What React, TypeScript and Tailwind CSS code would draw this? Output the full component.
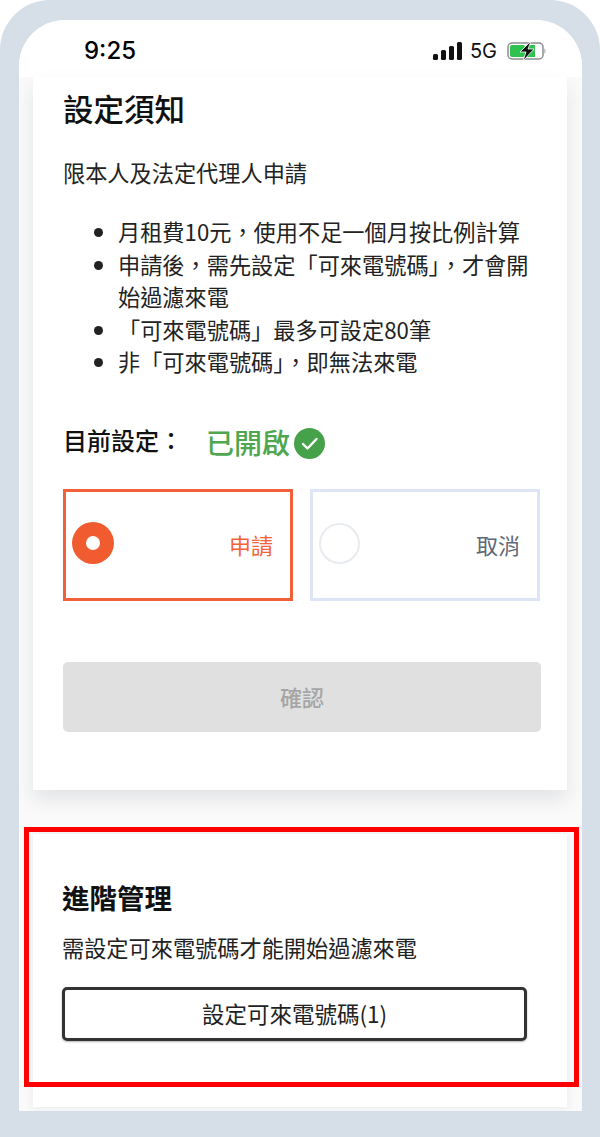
const cjk = "font-['Noto_Sans_CJK_TC','Noto_Sans',sans-serif]";

function StatusBar() {
  return (
    <div className="flex h-[57px] items-center justify-between bg-white pl-[65px] pr-[36px] pt-[5px]">
      <span className="font-['Inter',sans-serif] text-[24px] font-medium leading-none text-black">9:25</span>
      <div className="flex items-center">
        <svg width="29" height="19" viewBox="0 0 29 19" className="mr-[8px]">
          <rect x="0" y="12" width="5" height="6" rx="1.5" fill="#111" />
          <rect x="8" y="8" width="5" height="10" rx="1.5" fill="#111" />
          <rect x="16" y="4" width="5" height="14" rx="1.5" fill="#111" />
          <rect x="24" y="0" width="5" height="18" rx="1.5" fill="#111" />
        </svg>
        <span className="font-['Inter',sans-serif] text-[20px] leading-none text-[#111]">5G</span>
        <svg width="39" height="20" viewBox="0 0 39 20" className="ml-[10px]">
          <rect x="1" y="2" width="35" height="16" rx="4" fill="#fff" stroke="#8d8d8d" strokeWidth="1.5" />
          <rect x="3" y="4" width="15" height="12" rx="2" fill="#2fc24f" />
          <path d="M20 4h8v12h-8z" fill="#2fc24f" />
          <path d="M37.5 7.5c1.2.6 1.2 4.4 0 5z" fill="#8d8d8d" />
          <path d="M24 0L13 11h6l-3 9 11-12h-6z" fill="#111" stroke="#fff" strokeWidth="0.8" />
        </svg>
      </div>
    </div>
  );
}

function RadioCard({ label, selected }: { label: string; selected: boolean }) {
  return (
    <div
      className={`flex h-[112px] w-[230px] items-center justify-between pl-[6px] pr-[17px] border-[3px] ${
        selected ? "border-[#f2603a]" : "border-[#dce4f5]"
      }`}
    >
      {selected ? (
        <div className="mb-[3px] flex h-[42px] w-[42px] items-center justify-center rounded-full bg-[#f05c30]">
          <div className="h-[14px] w-[14px] rounded-full bg-white" />
        </div>
      ) : (
        <div className="mb-[3px] h-[41px] w-[41px] rounded-full border-[2px] border-[#e8ebef]" />
      )}
      <span className={`mb-[1px] text-[22px] leading-none ${selected ? "text-[#f4623a]" : "text-[#5d6878]"}`}>{label}</span>
    </div>
  );
}

export default function App() {
  const notes = [
    "月租費10元，使用不足一個月按比例計算",
    "申請後，需先設定「可來電號碼」，才會開始過濾來電",
    "「可來電號碼」最多可設定80筆",
    "非「可來電號碼」，即無法來電",
  ];

  return (
    <div className={`${cjk} h-[1137px] w-[600px] overflow-hidden bg-white`}>
      <div className="h-full rounded-t-[50px] bg-[#d6dee8] pb-[26px] pl-[19px] pr-[18px] pt-[20px]">
        <div className="relative h-full overflow-hidden rounded-t-[46px] bg-[#fafafa]">
          <StatusBar />

          <div className="flex flex-col gap-[44px] pl-[14px]">
            {/* Settings card */}
            <section className="w-[534px] bg-white pb-[58px] pl-[30px] pr-[26px] pt-[10px] shadow-[0_10px_18px_rgba(30,40,60,0.10)]">
              <h1 className="text-[30.5px] font-medium leading-[42px] text-[#111]">設定須知</h1>
              <p className="mt-[27px] text-[22.2px] leading-[32px] text-[#222]">限本人及法定代理人申請</p>
              <ul className="mt-[27px] list-disc pl-[55px] text-[22.2px] leading-[32.5px] text-[#222]">
                {notes.map((n) => (
                  <li key={n}>{n}</li>
                ))}
              </ul>
              <div className="mt-[44px] flex items-center">
                <span className="mb-[3px] w-[143px] text-[24px] font-medium leading-[34px] text-[#111]">目前設定：</span>
                <span className="text-[28px] font-medium leading-[40px] text-[#4ea74f]">已開啟</span>
                <svg width="31" height="31" viewBox="0 0 31 31" className="ml-[4px] mt-[4px]">
                  <circle cx="15.5" cy="15.5" r="15.5" fill="#46a24a" />
                  <path d="M9 16l4.5 4.5L22.5 11" fill="none" stroke="#fff" strokeWidth="2.4" strokeLinecap="round" strokeLinejoin="round" />
                </svg>
              </div>
              <div className="mt-[27px] flex gap-[17px]">
                <RadioCard label="申請" selected />
                <RadioCard label="取消" selected={false} />
              </div>
              <button className="mt-[61px] h-[70px] w-[478px] rounded-[5px] bg-[#e0e0e0] text-[22px] font-medium text-[#a5a5a5]">
                確認
              </button>
            </section>

            {/* Advanced management card */}
            <section className="h-[273px] w-[534px] bg-white pl-[29px] pr-[40px] pt-[43px] shadow-[0_0_10px_rgba(30,40,60,0.08)]">
              <h2 className="text-[27.5px] font-bold leading-[40px] text-[#111]">進階管理</h2>
              <p className="mt-[14px] text-[22.2px] leading-[32px] text-[#222]">需設定可來電號碼才能開始過濾來電</p>
              <button className="mt-[24px] h-[54px] w-[465px] rounded-[5px] border-[3px] border-[#333] text-[22.5px] text-[#222] shadow-[0_1px_2px_rgba(0,0,0,0.3)]">
                設定可來電號碼(1)
              </button>
            </section>
          </div>

          {/* Red highlight frame */}
          <div className="absolute left-[5px] top-[807px] h-[260px] w-[555px] border-[5px] border-[#ff0000]" />
        </div>
      </div>
    </div>
  );
}
